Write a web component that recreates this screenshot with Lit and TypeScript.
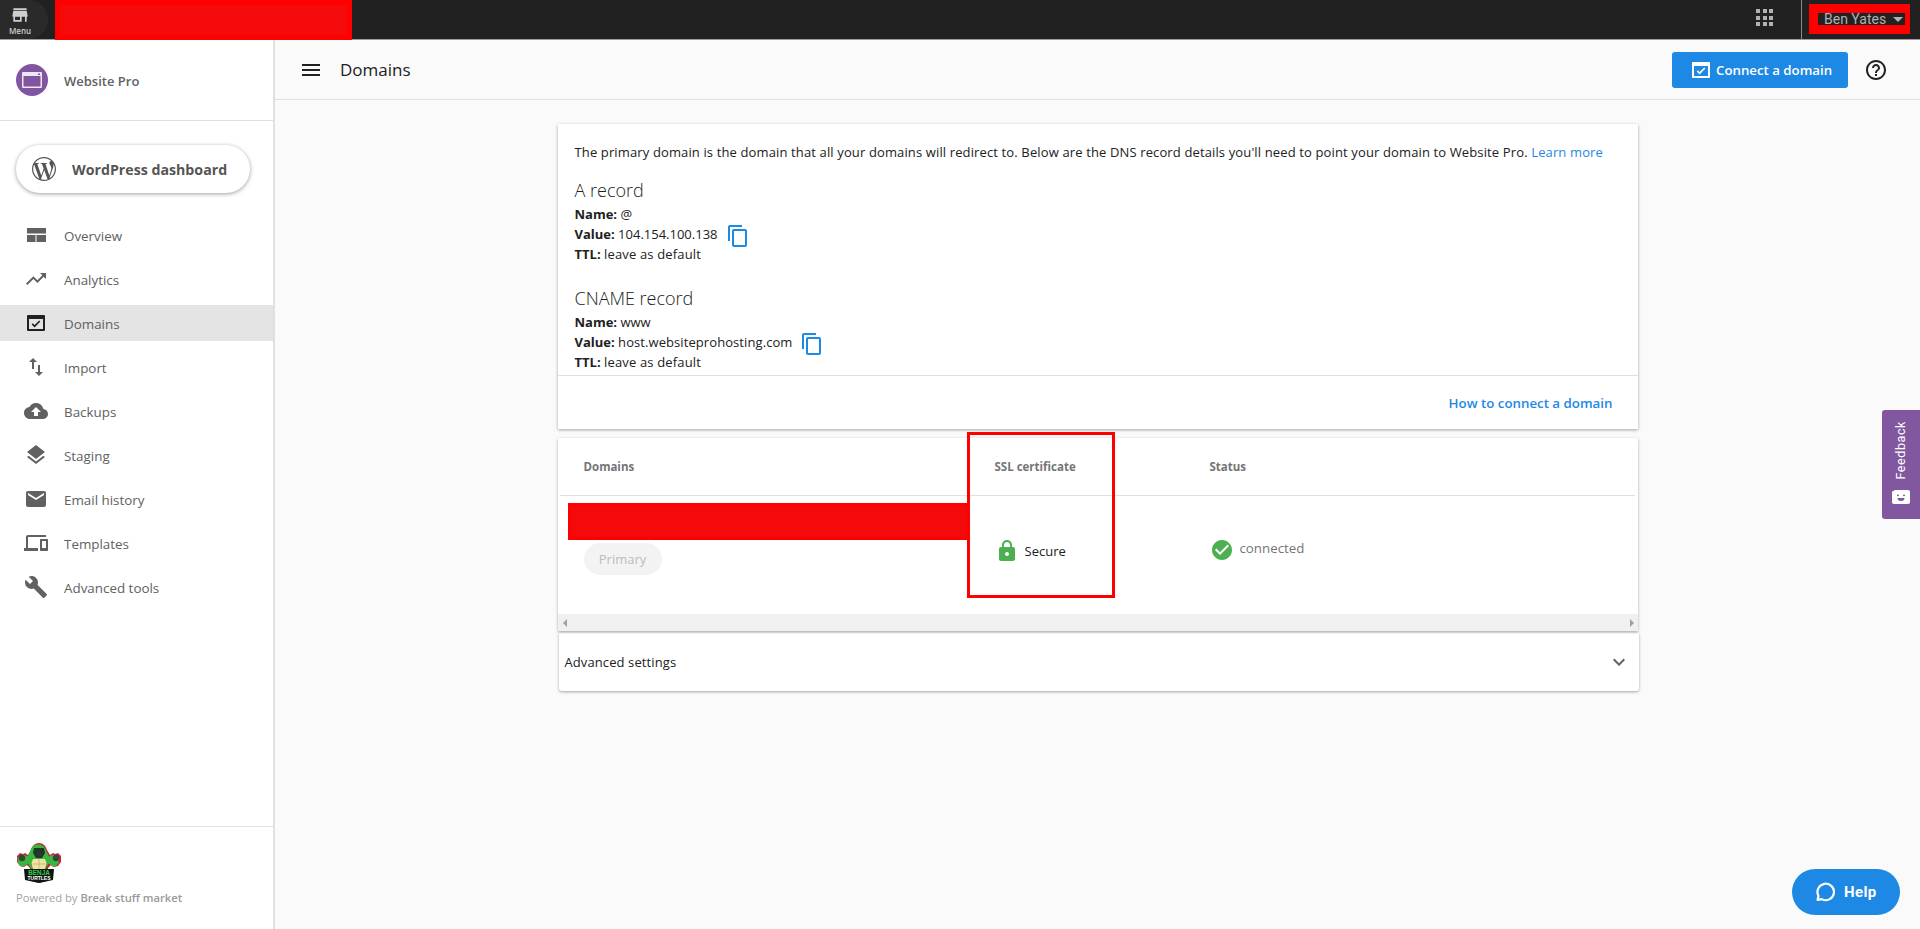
import { LitElement, html, css, svg } from "lit";
import { customElement } from "lit/decorators.js";

const icon = (d: string, cls = "") => html`<svg class="ic ${cls}" viewBox="0 0 24 24"><path d="${d}"></path></svg>`;

const P = {
  store: "M20 4H4v2h16V4zm1 10v-2l-1-5H4l-1 5v2h1v6h10v-6h4v6h2v-6h1zm-9 4H6v-4h6v4z",
  overview: "M3 5h19v5.5H3zM3 12h8.5v7H3zM12.5 12H22v7h-9.5z",
  analytics: "M16 6l2.29 2.29-4.88 4.88-4-4L2 16.59 3.41 18l6-6 4 4 6.3-6.29L22 12V6z",
  domains: "M4 4h16a1 1 0 0 1 1 1v14a1 1 0 0 1-1 1H4a1 1 0 0 1-1-1V5a1 1 0 0 1 1-1zm1 4v10h14V8zM10.6 16.4l-3-3 1.2-1.2 1.8 1.8 4.6-4.6 1.2 1.2z",
  imp: "M9 3L5 6.99h3V14h2V6.99h3L9 3zm7 14.01V10h-2v7.01h-3L15 21l4-3.99h-3z",
  cloud: "M19.35 10.04C18.67 6.59 15.64 4 12 4 9.11 4 6.6 5.64 5.35 8.04 2.34 8.36 0 10.91 0 14c0 3.31 2.69 6 6 6h13c2.76 0 5-2.24 5-5 0-2.64-2.05-4.78-4.65-4.96zM14 13v4h-4v-4H7l5-5 5 5h-3z",
  layers: "M11.99 18.54l-7.37-5.73L3 14.07l9 7 9-7-1.63-1.27-7.38 5.74zM12 16l7.36-5.73L21 9l-9-7-9 7 1.63 1.27L12 16z",
  email: "M20 4H4c-1.1 0-1.99.9-1.99 2L2 18c0 1.1.9 2 2 2h16c1.1 0 2-.9 2-2V6c0-1.1-.9-2-2-2zm0 4l-8 5-8-5V6l8 5 8-5v2z",
  devices: "M4 6h18V4H4c-1.1 0-2 .9-2 2v11H0v3h14v-3H4V6zm19 2h-6c-.55 0-1 .45-1 1v10c0 .55.45 1 1 1h6c.55 0 1-.45 1-1V9c0-.55-.45-1-1-1zm-1 9h-4v-7h4v7z",
  build: "M22.7 19l-9.1-9.1c.9-2.3.4-5-1.5-6.9-2-2-5-2.4-7.4-1.3L9 6 6 9 1.6 4.7C.4 7.1.9 10.1 2.9 12.1c1.9 1.9 4.6 2.4 6.9 1.5l9.1 9.1c.4.4 1 .4 1.4 0l2.3-2.3c.5-.4.5-1.1.1-1.4z",
  wp: "M21.469 6.825c.84 1.537 1.318 3.3 1.318 5.175 0 3.979-2.156 7.456-5.363 9.325l3.295-9.527c.615-1.54.82-2.771.82-3.864 0-.405-.026-.78-.07-1.11m-7.981.105c.647-.03 1.232-.105 1.232-.105.582-.075.514-.93-.067-.899 0 0-1.755.135-2.88.135-1.064 0-2.85-.15-2.85-.15-.585-.03-.661.855-.075.885 0 0 .54.061 1.125.09l1.68 4.605-2.37 7.08L5.354 6.9c.649-.03 1.234-.1 1.234-.1.585-.075.516-.93-.065-.896 0 0-1.746.138-2.874.138-.2 0-.438-.008-.69-.015C4.911 3.15 8.235 1.215 12 1.215c2.809 0 5.365 1.072 7.286 2.833-.046-.003-.091-.009-.141-.009-1.06 0-1.812.923-1.812 1.914 0 .89.513 1.643 1.06 2.531.411.72.89 1.643.89 2.977 0 .915-.354 1.994-.821 3.479l-1.075 3.585-3.9-11.61.001.014zM12 22.784c-1.059 0-2.081-.153-3.048-.437l3.237-9.406 3.315 9.087c.024.053.05.101.078.149-1.12.393-2.325.609-3.582.609M1.211 12c0-1.564.336-3.05.935-4.39L7.29 21.709C3.694 19.96 1.212 16.271 1.211 12M12 0C5.385 0 0 5.385 0 12s5.385 12 12 12 12-5.385 12-12S18.615 0 12 0",
  menu: "M3 18h18v-2H3v2zm0-5h18v-2H3v2zm0-7v2h18V6H3z",
  help: "M11 18h2v-2h-2v2zm1-16C6.48 2 2 6.48 2 12s4.48 10 10 10 10-4.48 10-10S17.52 2 12 2zm0 18c-4.41 0-8-3.59-8-8s3.59-8 8-8 8 3.59 8 8-3.59 8-8 8zm0-14c-2.21 0-4 1.79-4 4h2c0-1.1.9-2 2-2s2 .9 2 2c0 2-3 1.75-3 5h2c0-2.25 3-2.5 3-5 0-2.21-1.79-4-4-4z",
  copy: "M16 1H4c-1.1 0-2 .9-2 2v14h2V3h12V1zm3 4H8c-1.1 0-2 .9-2 2v14c0 1.1.9 2 2 2h11c1.1 0 2-.9 2-2V7c0-1.1-.9-2-2-2zm0 16H8V7h11v14z",
  lock: "M18 8h-1V6c0-2.76-2.24-5-5-5S7 3.24 7 6v2H6c-1.1 0-2 .9-2 2v10c0 1.1.9 2 2 2h12c1.1 0 2-.9 2-2V10c0-1.1-.9-2-2-2zm-6 9c-1.1 0-2-.9-2-2s.9-2 2-2 2 .9 2 2-.9 2-2 2zm3.1-9H8.9V6c0-1.71 1.39-3.1 3.1-3.1 1.71 0 3.1 1.39 3.1 3.1v2z",
  check: "M12 2C6.48 2 2 6.48 2 12s4.48 10 10 10 10-4.48 10-10S17.52 2 12 2zm-2 15l-5-5 1.41-1.41L10 14.17l7.59-7.59L19 8l-9 9z",
  chevron: "M7.41 8.59L12 13.17l4.59-4.58L18 10l-6 6-6-6 1.41-1.41z",
};

const NAV: [string, string][] = [
  ["Overview", P.overview],
  ["Analytics", P.analytics],
  ["Domains", P.domains],
  ["Import", P.imp],
  ["Backups", P.cloud],
  ["Staging", P.layers],
  ["Email history", P.email],
  ["Templates", P.devices],
  ["Advanced tools", P.build],
];

const turtle = svg`
  <path d="M23 0c4 0 7 3 8 7l3 5 3-2 2 1 3-1 3 3v6l-3 4-4 1-3-2-3 3v2l3 2-1 8-3 1-8 2-8-2-3-1-1-8 3-2v-2l-3-3-3 2-4-1-3-4v-6l3-3 3 1 2-1 3 2 3-5c1-4 4-7 8-7z" fill="#c8213f"/>
  <path d="M23 1.500c3.500 0 6 2.500 7 6l3 6 4-2 3 2 3 1-.5 6-3 3-3 0-4-3-3 5H15l-3-5-4 3-3 0-3-3-.5-6 3-1 3-2 4 2 3-6c1-3.500 3.500-6 7-6z" fill="#3ab53f"/>
  <path d="M18 5h10l1 5-3 5h-6l-3-5z" fill="#183a22"/>
  <circle cx="23" cy="11" r="2.400" fill="#333"/>
  <circle cx="6" cy="15" r="3.200" fill="#2c4a34"/><circle cx="40" cy="15" r="3.200" fill="#2c4a34"/>
  <path d="M17 16h12l1.500 4-1.500 6H17l-1.500-6z" fill="#efe3a4"/>
  <path d="M23 16v10M17 21h12" stroke="#b9a860" stroke-width=".7"/>
  <path d="M8 26h30l-1 11-14 3-14-3z" fill="#0b1710"/>
  <text x="23" y="31.500" text-anchor="middle" font-family="'Liberation Sans',sans-serif" font-size="6.400" font-weight="700" fill="#37c94a">BENJA</text>
  <text x="23" y="37" text-anchor="middle" font-family="'Liberation Sans',sans-serif" font-size="5" font-weight="700" fill="#fff">TURTLES</text>
`;

@customElement("app-root")
export class AppRoot extends LitElement {
  static styles = css`
    :host { display: flex; flex-direction: column; height: 100vh; overflow: hidden; position: relative;
      font-family: "Open Sans", sans-serif; color: #212121; background: #fafafa; }
    .ic { width: 24px; height: 24px; fill: currentColor; flex: none; display: block; }

    .top { height: 39px; flex: none; background: #212121; border-bottom: 1px solid #9e9e9e; display: flex; align-items: stretch; }
    .menu-btn { width: 48px; background: #2a2a2a; border-radius: 0 20px 20px 0; color: #cfcfcf; display: flex; flex-direction: column;
      align-items: center; font-size: 8px; font-weight: 600; line-height: 10px; padding: 5px 8px 0 0; box-sizing: border-box; }
    .menu-btn .ic { width: 20px; height: 20px; margin-bottom: 1px; }
    .spacer { flex: 1; }
    .grid { width: 17px; height: 17px; margin: 9px 28px 0 0; display: grid; grid-template-columns: repeat(3, 4px); grid-template-rows: repeat(3, 4px); gap: 2.5px; }
    .grid i { background: #b5b0b5; }
    .sep { width: 1px; background: #8a8a8a; margin-right: 7px; }
    .user { width: 101px; height: 30px; margin: 4px 10px 0 0; box-sizing: border-box; border-style: solid; border-color: #f00; border-width: 9px 5px 9px 9px;
      background: #212121; display: flex; align-items: center; gap: 7px; color: #b0b0b0;
      font-family: Roboto, sans-serif; font-size: 14px; padding-left: 6px; }
    .caret { width: 0; height: 0; border: 5px solid transparent; border-top-color: #b0b0b0; border-bottom: 0; }

    .body { flex: 1; display: flex; min-height: 0; }
    .side { width: 275px; box-sizing: border-box; flex: none; background: #fff; border-right: 2px solid #e0e0e0; display: flex; flex-direction: column; }
    .brand { height: 81px; box-sizing: border-box; border-bottom: 1px solid #e0e0e0; padding: 0 16px 1px; display: flex; align-items: center; gap: 16px;
      font-size: 13px; font-weight: 600; color: #616161; }
    .brand svg { width: 32px; height: 32px; flex: none; }
    .brand span { margin-top: 2px; }
    .wp { margin: 24px 0 0 16px; width: 234px; height: 48px; border-radius: 24px; background: #fff; box-sizing: border-box; padding-left: 16px;
      box-shadow: 0 1px 4px rgba(0,0,0,.38); display: flex; align-items: center; gap: 16px; font-size: 14.2px; font-weight: 700; color: #555; }
    .wp .ic { color: #555; }
    .nav { margin-top: 24px; display: flex; flex-direction: column; gap: 8px; flex: 1; }
    .row { height: 36px; display: flex; align-items: center; padding-left: 24px; gap: 16px; font-size: 13.4px; color: #616161; }
    .row span { margin-top: 1px; }
    .row.on { background: #e4e4e4; }
    .row.on .ic { color: #212121; }
    .foot { border-top: 1px solid #e0e0e0; height: 103px; box-sizing: border-box; padding: 16px 16px 0; font-size: 11.2px; color: #a3a3a3; }
    .foot svg { width: 46px; height: 40px; display: block; margin-bottom: 7px; }
    .foot b { font-weight: 600; color: #999; }

    .main { flex: 1; min-width: 0; display: flex; flex-direction: column; }
    .head { height: 60px; flex: none; box-sizing: border-box; border-bottom: 1px solid #e0e0e0; display: flex; align-items: center; padding: 0 32px 0 24px; }
    .head h1 { margin: 0 0 0 17px; font-size: 17px; font-weight: 500; color: #212121; flex: 1; }
    .connect { width: 176px; height: 36px; border-radius: 3px; background: #1e88e5; color: #fff; display: flex; align-items: center; box-sizing: border-box;
      padding-left: 17px; gap: 3px; font-size: 13.25px; font-weight: 600; margin-right: 16px; }
    .connect .ic { margin-top: 1px; }

    .content { width: 1080px; margin: 24px auto 0; display: flex; flex-direction: column; }
    .card { background: #fff; box-shadow: 0 1px 3px rgba(0,0,0,.35); }
    .intro { padding: 18px 17px 0; height: 252px; box-sizing: border-box; border-bottom: 1px solid #e0e0e0; font-size: 13px; line-height: 20px; }
    .intro p { margin: 0; letter-spacing: .13px; }
    .intro a { color: #1e88e5; }
    .intro h3 { font-size: 18px; font-weight: 300; margin: 0; line-height: 26px; }
    .h1st { margin: 15px 0 1px !important; }
    .h2nd { margin: 21px 0 1px !important; }
    .kv { display: flex; align-items: center; height: 20px; white-space: pre; }
    .kv b { font-weight: 700; }
    .wide { letter-spacing: .16px; }
    .host { letter-spacing: .08px; }
    .copy { color: #1e88e5; margin-left: 8px; margin-top: 4px; }
    .how { height: 53px; display: flex; align-items: center; justify-content: flex-end; padding-right: 25px; color: #1e88e5; font-size: 13.3px; font-weight: 600; }

    .table { margin-top: 9px; position: relative; border-radius: 2px 2px 0 0; }
    .thead { height: 58px; margin: 0 3px 0 2px; border-bottom: 1px solid #e0e0e0; display: grid; grid-template-columns: 407px 243px 1fr; align-items: center;
      font-size: 11.5px; font-weight: 700; color: #757575; box-sizing: border-box; }
    .thead span:first-child { padding-left: 24px; }
    .thead span:nth-child(2) { padding-left: 28px; }
    .tbody { height: 118px; margin: 0 0 0 2px; display: grid; grid-template-columns: 407px 243px 1fr; }
    .c1 { padding: 47px 0 0 24px; }
    .pill { display: inline-flex; width: 78px; height: 32px; border-radius: 16px; background: #f3f3f3; color: #bdbdbd; align-items: center; justify-content: center; font-size: 13px; }
    .c2 { display: flex; align-items: center; gap: 6px; font-size: 13px; color: #212121; padding: 0 0 9px 30px; margin-left: -2px; box-sizing: border-box; }
    .c2 .ic { color: #4caf50; }
    .c3 { display: flex; align-items: center; gap: 6px; font-size: 13.3px; color: #757575; box-sizing: border-box; padding-bottom: 10px; }
    .c3 .ic { color: #4caf50; }
    .c3 span { margin-top: -4px; }
    .scroll { height: 17px; background: #f0f0f0; display: flex; align-items: center; justify-content: space-between; padding: 0 4px 0 5px; }
    .tri-l { border: 4px solid transparent; border-right: 4px solid #a0a0a0; border-left: 0; }
    .tri-r { border: 4px solid transparent; border-left: 4px solid #a0a0a0; border-right: 0; }
    .adv { margin: 2px -1px 0 1px; height: 58px; display: flex; align-items: center; justify-content: space-between; padding: 0 8px 0 6px; font-size: 13px; letter-spacing: .1px; border-radius: 0 0 3px 3px; color: #212121; }
    .adv .ic { color: #616161; }

    .red-top { position: absolute; left: 55px; top: 0; width: 297px; height: 40px; background: #f40a0a; box-shadow: inset 0 0 0 5px #f00; }
    .red-dom { position: absolute; left: 10px; top: 65px; width: 402px; height: 37px; background: #f40a0a; box-shadow: inset 0 0 0 3px #f00; }
    .red-box { position: absolute; left: 409px; top: -6px; width: 148px; height: 166px; box-sizing: border-box; border: 3px solid #f00; pointer-events: none; }

    .feedback { position: absolute; right: 0; top: 410px; width: 38px; height: 109px; background: #81589f; border-radius: 3px 0 0 3px; color: #fff;
      display: flex; flex-direction: column-reverse; align-items: center; justify-content: flex-start; padding: 0 0 15px; box-sizing: border-box; }
    .feedback span { writing-mode: vertical-rl; transform: rotate(180deg); font-family: Roboto, sans-serif; font-size: 12.5px; letter-spacing: 0.6px; margin: 0 0 10px; line-height: 14px; }
    .feedback svg { width: 18px; height: 14px; flex: none; }
    .helpb { position: absolute; left: 1792px; top: 869px; width: 108px; height: 46px; border-radius: 23px; background: #1e88e5; color: #fff; display: flex;
      align-items: center; padding-left: 21px; gap: 9px; box-sizing: border-box; font-family: Roboto, sans-serif; font-size: 15px; font-weight: 700; letter-spacing: .4px; }
    .helpb svg { width: 22px; height: 22px; }
  `;

  render() {
    return html`
      <div class="top">
        <div class="menu-btn">${icon(P.store)}<span>Menu</span></div>
        <div class="spacer"></div>
        <div class="grid">${Array.from({ length: 9 }, () => html`<i></i>`)}</div>
        <div class="sep"></div>
        <div class="user">Ben Yates<span class="caret"></span></div>
      </div>
      <div class="red-top"></div>
      <div class="body">
        <aside class="side">
          <div class="brand">
            <svg viewBox="0 0 32 32"><circle cx="16" cy="16" r="16" fill="#81559f"></circle><rect x="6" y="8" width="20" height="16" rx="1" fill="#efe6f4"></rect><rect x="7.5" y="12" width="17" height="10.5" fill="#81559f"></rect><rect x="22" y="9.5" width="2" height="1.5" fill="#81559f"></rect></svg>
            <span>Website Pro</span>
          </div>
          <div class="wp">${icon(P.wp)}<span>WordPress dashboard</span></div>
          <nav class="nav">
            ${NAV.map(([label, d]) => html`<div class="row ${label === "Domains" ? "on" : ""}">${icon(d)}<span>${label}</span></div>`)}
          </nav>
          <div class="foot">
            <svg viewBox="0 0 46 40">${turtle}</svg>
            Powered by <b>Break stuff market</b>
          </div>
        </aside>
        <main class="main">
          <header class="head">
            ${icon(P.menu)}
            <h1>Domains</h1>
            <div class="connect">${icon(P.domains)}<span>Connect a domain</span></div>
            ${icon(P.help)}
          </header>
          <div class="content">
            <section class="card">
              <div class="intro">
                <p>The primary domain is the domain that all your domains will redirect to. Below are the DNS record details you'll need to point your domain to Website Pro. <a>Learn more</a></p>
                <h3 class="h1st">A record</h3>
                <div class="kv"><b>Name: </b>@</div>
                <div class="kv"><b>Value: </b>104.154.100.138${icon(P.copy, "copy")}</div>
                <div class="kv"><b>TTL: </b><span class="wide">leave as default</span></div>
                <h3 class="h2nd">CNAME record</h3>
                <div class="kv"><b>Name: </b>www</div>
                <div class="kv"><b>Value: </b><span class="host">host.websiteprohosting.com</span>${icon(P.copy, "copy")}</div>
                <div class="kv"><b>TTL: </b><span class="wide">leave as default</span></div>
              </div>
              <div class="how">How to connect a domain</div>
            </section>
            <section class="card table">
              <div class="thead"><span>Domains</span><span>SSL certificate</span><span>Status</span></div>
              <div class="tbody">
                <div class="c1"><span class="pill">Primary</span></div>
                <div class="c2">${icon(P.lock)}<span>Secure</span></div>
                <div class="c3">${icon(P.check)}<span>connected</span></div>
              </div>
              <div class="scroll"><i class="tri-l"></i><i class="tri-r"></i></div>
              <div class="red-dom"></div>
              <div class="red-box"></div>
            </section>
            <section class="card adv"><span>Advanced settings</span>${icon(P.chevron)}</section>
          </div>
        </main>
      </div>
      <div class="feedback">
        <svg viewBox="0 0 18 16" preserveAspectRatio="none"><path d="M0 2L3 0h13a2 2 0 0 1 2 2v12a2 2 0 0 1-2 2H2a2 2 0 0 1-2-2z" fill="#fff"></path><circle cx="6" cy="6" r="1" fill="#81589f"></circle><circle cx="12" cy="6" r="1" fill="#81589f"></circle><path d="M5.500 9h7a3.500 3.500 0 0 1-7 0z" fill="#81589f"></path></svg>
        <span>Feedback</span>
      </div>
      <div class="helpb">
        <svg viewBox="0 0 24 24" fill="none" stroke="#fff" stroke-width="2.4"><path d="M5 20.500l1-4.200A9 9 0 1 1 9.500 19.800z" stroke-linejoin="round"></path></svg>
        <span>Help</span>
      </div>
    `;
  }
}
